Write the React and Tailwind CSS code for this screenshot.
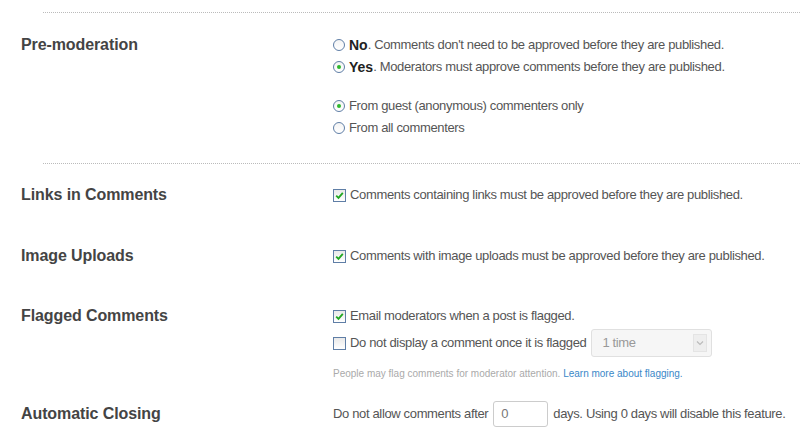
import React from "react";

const Radio = ({ checked }) => (
  <span className="inline-flex items-center justify-center w-[12px] h-[12px] rounded-full border border-[#5f7ea6] bg-gradient-to-b from-[#f4f4f4] to-white mr-[4px] shrink-0">
    {checked && <span className="w-[4px] h-[4px] rounded-full bg-[#2eb82e]" />}
  </span>
);

const Checkbox = ({ checked }) => (
  <span className="inline-flex items-center justify-center w-[13px] h-[13px] border border-[#5f7ea6] bg-gradient-to-b from-[#e9e9e9] to-white mr-[4px] shrink-0">
    {checked && (
      <svg width="9" height="9" viewBox="0 0 9 9">
        <path d="M1.2 4.6 L3.5 6.9 L7.8 1.8" fill="none" stroke="#22a722" strokeWidth="1.8" />
      </svg>
    )}
  </span>
);

const Label = ({ children }) => (
  <div className="w-[312px] shrink-0 text-[16px] font-bold text-[#444] leading-[22px] font-['Liberation_Sans',Arial,sans-serif] tracking-[-0.1px]">
    {children}
  </div>
);

const Line = ({ children, className = "" }) => (
  <div className={`flex items-center h-[22px] whitespace-nowrap ${className}`}>{children}</div>
);

export default function App() {
  return (
    <div className="w-[800px] h-[442px] bg-white overflow-hidden pl-[21px] text-[13px] tracking-[-0.35px] text-[#555] font-['Liberation_Sans',Arial,sans-serif]">
      <div className="pt-[12px]">
        <div className="ml-[22px] border-t border-dotted border-[#bbb]" />
      </div>

      {/* Pre-moderation */}
      <div className="flex pt-[21px]">
        <Label>Pre-moderation</Label>
        <div>
          <Line>
            <Radio />
            <b className="text-[#222] text-[14px] tracking-normal">No</b>
            <span>. Comments don't need to be approved before they are published.</span>
          </Line>
          <Line>
            <Radio checked />
            <b className="text-[#222] text-[14px] tracking-normal">Yes</b>
            <span>. Moderators must approve comments before they are published.</span>
          </Line>
          <Line className="mt-[17px]">
            <Radio checked />
            <span>From guest (anonymous) commenters only</span>
          </Line>
          <Line>
            <Radio />
            <span>From all commenters</span>
          </Line>
        </div>
      </div>

      <div className="mt-[24px] ml-[22px] border-t border-dotted border-[#bbb]" />

      {/* Links */}
      <div className="flex pt-[20px]">
        <Label>Links in Comments</Label>
        <Line>
          <Checkbox checked />
          <span>Comments containing links must be approved before they are published.</span>
        </Line>
      </div>

      {/* Image uploads */}
      <div className="flex mt-[39px]">
        <Label>Image Uploads</Label>
        <Line>
          <Checkbox checked />
          <span>Comments with image uploads must be approved before they are published.</span>
        </Line>
      </div>

      {/* Flagged */}
      <div className="flex mt-[38px]">
        <Label>Flagged Comments</Label>
        <div>
          <Line>
            <Checkbox checked />
            <span>Email moderators when a post is flagged.</span>
          </Line>
          <div className="flex items-center h-[32px] whitespace-nowrap">
            <Checkbox />
            <span>Do not display a comment once it is flagged</span>
            <div className="ml-[5px] w-[121px] h-[28px] rounded-[3px] border border-[#e0e0e0] bg-[#f6f6f6] flex items-center justify-between pl-[10px] pr-[4px] text-[#999]">
              <span>1 time</span>
              <span className="w-[14px] h-[18px] border border-[#e4e4e4] bg-[#eee] flex items-center justify-center">
                <svg width="8" height="6" viewBox="0 0 8 6">
                  <path d="M1 1.5 L4 4.5 L7 1.5" fill="none" stroke="#bbb" strokeWidth="1.2" />
                </svg>
              </span>
            </div>
          </div>
          <div className="mt-[8px] text-[10px] leading-[14px] tracking-[0px] text-[#aaa] whitespace-nowrap">
            People may flag comments for moderator attention.{" "}
            <span className="text-[#3a87c8]">Learn more about flagging.</span>
          </div>
        </div>
      </div>

      {/* Automatic closing */}
      <div className="flex items-center mt-[19px] h-[28px]">
        <Label>Automatic Closing</Label>
        <div className="flex items-center whitespace-nowrap">
          <span>Do not allow comments after</span>
          <div className="ml-[5px] mr-[5px] w-[55px] h-[26px] rounded-[3px] border border-[#ccc] bg-white flex items-center pl-[7px] text-[#777]">
            0
          </div>
          <span>days. Using 0 days will disable this feature.</span>
        </div>
      </div>
    </div>
  );
}
